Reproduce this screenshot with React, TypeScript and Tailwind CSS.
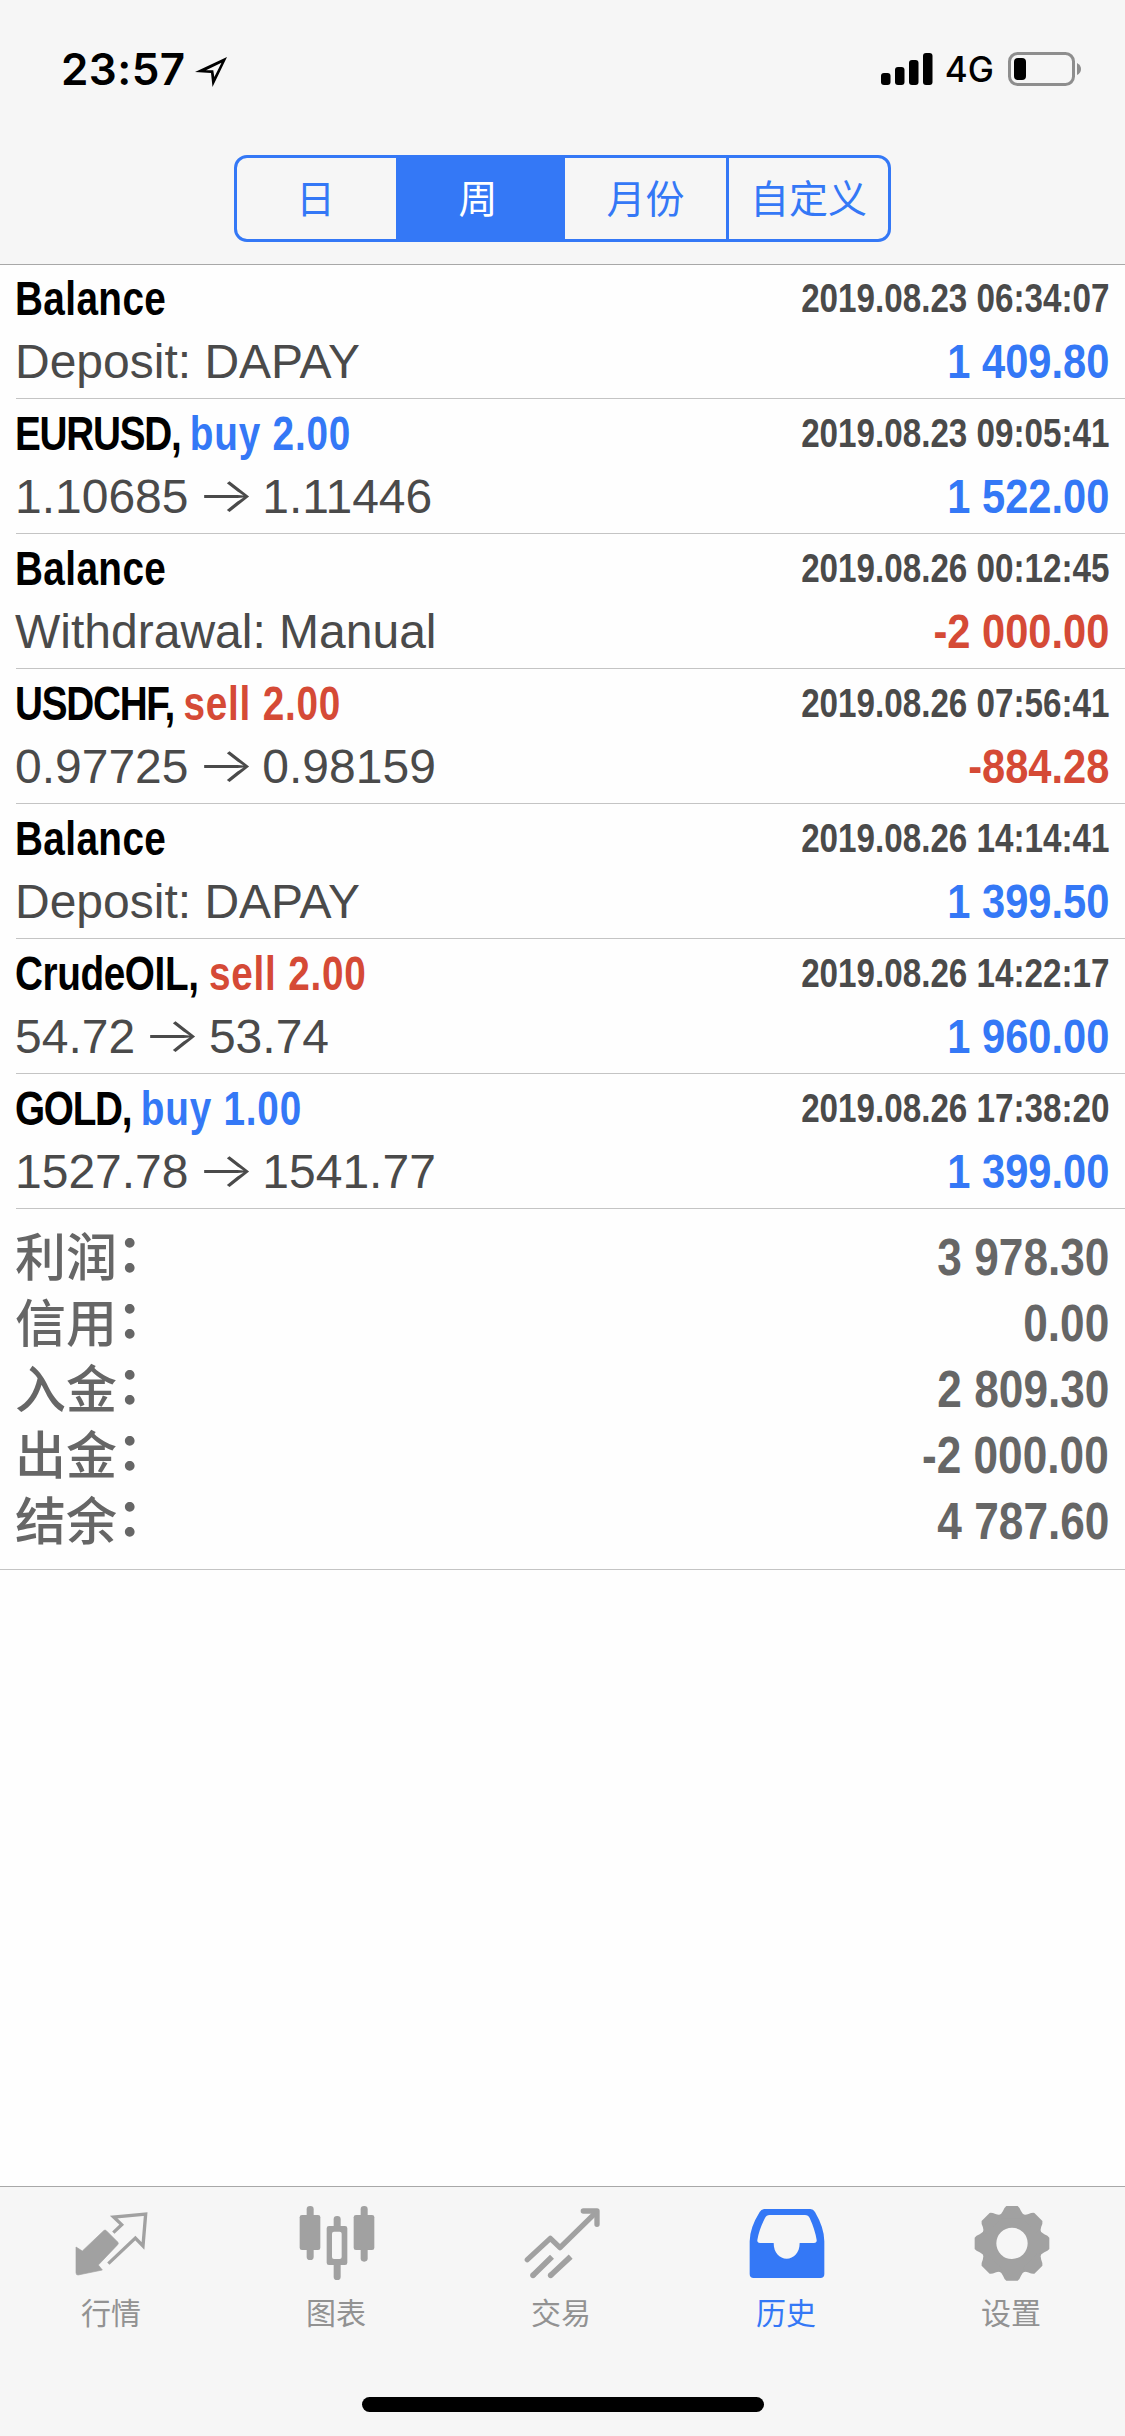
import React from "react";

type Tone = "blue" | "red";

type Deal = {
  symbol: string;
  action?: string;
  actionTone?: Tone;
  time: string;
  comment?: string;
  open?: string;
  close?: string;
  profit: string;
  profitTone: Tone;
};

const periods = ["日", "周", "月份", "自定义"];

const deals: Deal[] = [
  { symbol: "Balance", time: "2019.08.23 06:34:07", comment: "Deposit: DAPAY", profit: "1 409.80", profitTone: "blue" },
  { symbol: "EURUSD", action: "buy 2.00", actionTone: "blue", time: "2019.08.23 09:05:41", open: "1.10685", close: "1.11446", profit: "1 522.00", profitTone: "blue" },
  { symbol: "Balance", time: "2019.08.26 00:12:45", comment: "Withdrawal: Manual", profit: "-2 000.00", profitTone: "red" },
  { symbol: "USDCHF", action: "sell 2.00", actionTone: "red", time: "2019.08.26 07:56:41", open: "0.97725", close: "0.98159", profit: "-884.28", profitTone: "red" },
  { symbol: "Balance", time: "2019.08.26 14:14:41", comment: "Deposit: DAPAY", profit: "1 399.50", profitTone: "blue" },
  { symbol: "CrudeOIL", action: "sell 2.00", actionTone: "red", time: "2019.08.26 14:22:17", open: "54.72", close: "53.74", profit: "1 960.00", profitTone: "blue" },
  { symbol: "GOLD", action: "buy 1.00", actionTone: "blue", time: "2019.08.26 17:38:20", open: "1527.78", close: "1541.77", profit: "1 399.00", profitTone: "blue" },
];

const totals = [
  { label: "利润", value: "3 978.30" },
  { label: "信用", value: "0.00" },
  { label: "入金", value: "2 809.30" },
  { label: "出金", value: "-2 000.00" },
  { label: "结余", value: "4 787.60" },
];

const toneClass = {
  blue: "text-[#3478f6]",
  red: "text-[#d54a36]",
};

// bold sans squeezed horizontally to get a condensed face
const condensed = "font-['Liberation_Sans',sans-serif] font-bold whitespace-pre";

// all-caps tickers are set tighter than mixed case names
const symbolTracking = (symbol: string) =>
  symbol === symbol.toUpperCase() ? "tracking-[-1.6px]" : "tracking-[-0.5px]";

const StatusBar = () => (
  <div className="flex h-[155px] items-start justify-between pl-[61px] pr-[43px] pt-[50px] text-black">
    <div className="flex items-center">
      <span className="font-['Inter',sans-serif] text-[44px] font-semibold leading-[38px] tracking-[0.4px]">
        23:57
      </span>
      <svg className="ml-[9px] h-[38px] w-[34px]" viewBox="0 0 34 38">
        <path
          fillRule="evenodd"
          d="M1 22 33 7 18.500 37 17 23ZM12 20.300 19.300 20.300 20.300 27 27.500 12.800Z"
        />
      </svg>
    </div>
    <div className="flex items-center">
      <svg className="h-[38px] w-[52px]" viewBox="0 0 52 38">
        <rect x="0" y="23" width="9.500" height="12" rx="3" />
        <rect x="14" y="17" width="9.500" height="18" rx="3" />
        <rect x="28" y="10" width="9.500" height="25" rx="3" />
        <rect x="42" y="3" width="9.500" height="32" rx="3" />
      </svg>
      <span className="ml-[12px] font-['Inter',sans-serif] text-[35px] font-medium leading-[38px]">
        4G
      </span>
      <svg className="ml-[14px] h-[38px] w-[74px]" viewBox="0 0 74 38">
        <rect x="1.500" y="3.500" width="64" height="31" rx="8" fill="none" stroke="#8e8e8e" strokeWidth="3" />
        <path d="M69 13Q73 15 73 19T69 25Z" fill="#8e8e8e" />
        <rect x="6" y="8" width="12" height="22" rx="4" />
      </svg>
    </div>
  </div>
);

const PeriodSwitch = () => (
  <div className="mx-auto grid h-[87px] w-[657px] grid-cols-[159px_166px_164px_1fr] overflow-hidden rounded-[13px] border-3 border-[#3478f6]">
    {periods.map((period, i) => (
      <button
        key={period}
        className={`pb-[5px] font-['Noto_Sans_CJK_SC',sans-serif] text-[39px] leading-[60px] ${
          i > 1 ? "border-l-3 border-[#3478f6]" : "pr-[2px]"
        } ${i === 1 ? "bg-[#3478f6] text-white" : "text-[#3478f6]"}`}
      >
        {period}
      </button>
    ))}
  </div>
);

const DealRow = ({ deal }: { deal: Deal }) => (
  <li className="flex h-[135px] justify-between border-b border-[#c4c4c4] pr-[16px]">
    <div className="-ml-px">
      <div className={`${condensed} mt-[4px] h-[64px] origin-left scale-x-[0.79] text-[49px] leading-[60px] text-black`}>
        {deal.action ? (
          <>
            <span className={symbolTracking(deal.symbol)}>{deal.symbol}, </span>
            <span className={`tracking-[1px] ${toneClass[deal.actionTone ?? "blue"]}`}>
              {deal.action}
            </span>
          </>
        ) : (
          <span className="tracking-[0.5px]">{deal.symbol}</span>
        )}
      </div>
      <div className="flex h-[60px] whitespace-pre font-['Liberation_Sans',sans-serif] text-[48px] leading-[60px] text-[#4a4a4a]">
        {deal.comment ?? (
          <>
            {deal.open}
            <span className="-mt-[2px] mb-[2px] scale-x-[1.28] px-[14px] font-['Inter',sans-serif] font-light">
              →
            </span>
            {deal.close}
          </>
        )}
      </div>
    </div>
    <div className="text-right">
      <div className={`${condensed} mt-[4px] h-[63px] origin-right scale-x-[0.83] text-[40px] leading-[60px] text-[#4a4a4a]`}>
        {deal.time}
      </div>
      <div className={`${condensed} h-[60px] origin-right scale-x-[0.85] text-[49px] leading-[60px] ${toneClass[deal.profitTone]}`}>
        {deal.profit}
      </div>
    </div>
  </li>
);

const Totals = () => (
  <dl className="border-b border-[#c4c4c4] pb-[15px] pl-[15px] pr-[16px] pt-[15px] text-[#666]">
    {totals.map((row) => (
      <div key={row.label} className="flex h-[66px] justify-between">
        <dt className="-mt-[3px] flex font-['Noto_Sans_CJK_SC',sans-serif] text-[51px] font-medium leading-[66px]">
          {row.label}
          <span className="-mt-[4px] font-bold">：</span>
        </dt>
        <dd className={`${condensed} origin-right scale-x-[0.85] text-[52px] leading-[66px]`}>
          {row.value}
        </dd>
      </div>
    ))}
  </dl>
);

const QuotesIcon = () => (
  <svg className="size-[78px]" viewBox="0 0 234 234">
    <path
      d="M6 132 25 144 89 83Q93 79 97 83L131 117Q135 121 131 125L73 186 85 201 12 216Q6 216 6 209Z"
      fill="currentColor"
      stroke="currentColor"
      strokeWidth="2"
      strokeLinejoin="round"
    />
    <path
      d="M118 89 143 65 119 42 215 33 207 129 184 105 103 182"
      fill="none"
      stroke="currentColor"
      strokeWidth="10"
    />
  </svg>
);

const ChartIcon = () => (
  <svg className="size-[78px]" viewBox="0 0 234 234" fill="currentColor">
    <rect x="23" y="9" width="21" height="162" rx="10" />
    <rect x="2" y="36" width="62" height="105" rx="7" />
    <rect x="104" y="39" width="21" height="40" rx="10" />
    <rect x="104" y="175" width="21" height="56" rx="10" />
    <path
      fillRule="evenodd"
      d="M90 69H138Q145 69 145 76V179Q145 186 138 186H90Q83 186 83 179V76Q83 69 90 69ZM105 86Q99 86 99 92V162Q99 168 105 168H122Q128 168 128 162V92Q128 86 122 86Z"
    />
    <rect x="185" y="9" width="21" height="167" rx="10" />
    <rect x="164" y="36" width="62" height="105" rx="7" />
  </svg>
);

const TradeIcon = () => (
  <svg className="size-[78px]" viewBox="0 0 234 234" fill="none" stroke="currentColor" strokeWidth="16">
    <path d="M10 170 79 106 108 134 216 28" strokeLinecap="round" strokeLinejoin="round" />
    <path d="M178 24H219V64" strokeLinecap="round" strokeLinejoin="round" />
    <path d="M84 161 28 216M140 161 81 216" strokeWidth="17" />
    <g fill="currentColor" stroke="none">
      <circle cx="27" cy="217" r="8.500" />
      <circle cx="80" cy="217" r="8.500" />
    </g>
  </svg>
);

const HistoryIcon = () => (
  <svg className="size-[78px]" viewBox="0 0 234 234" fill="currentColor">
    <path
      fillRule="evenodd"
      d="M47 18H184Q193 18 198 27Q226 75 226 115V213Q226 225 214 225H14Q2 225 2 213V115Q2 75 32 27Q37 18 47 18ZM62 36Q52 36 48 45Q30 80 25 111Q24 120 33 120H74C74 150 92 167 113 167S152 150 152 120H195Q204 120 203 111Q198 80 182 45Q178 36 168 36Z"
    />
  </svg>
);

const SettingsIcon = () => (
  <svg className="size-[78px]" viewBox="0 0 234 234" fill="currentColor">
    <g transform="translate(114 121)">
      <circle r="69" fill="none" stroke="currentColor" strokeWidth="44" />
      {[0, 45, 90, 135, 180, 225, 270, 315].map((angle) => (
        <path
          key={angle}
          transform={`rotate(${angle})`}
          d="M-17 -112H17Q23 -108 27 -97Q31 -87 42 -82L30 -75H-30L-42 -82Q-31 -87 -27 -97Q-23 -108 -17 -112Z"
        />
      ))}
    </g>
  </svg>
);

const tabs = [
  { label: "行情", icon: <QuotesIcon /> },
  { label: "图表", icon: <ChartIcon /> },
  { label: "交易", icon: <TradeIcon /> },
  { label: "历史", icon: <HistoryIcon />, active: true },
  { label: "设置", icon: <SettingsIcon /> },
];

const TabBar = () => (
  <nav className="h-[250px] border-t border-[#a8a8a8] bg-[#f6f6f6]">
    <div className="grid h-[210px] grid-cols-5 pt-[16px]">
      {tabs.map((tab) => (
        <a
          key={tab.label}
          className={`flex flex-col items-center ${tab.active ? "text-[#3478f6]" : "text-[#a1a1a1]"}`}
        >
          {tab.icon}
          <span
            className={`mt-[8px] pr-[3px] font-['Noto_Sans_CJK_SC',sans-serif] text-[30px] leading-[44px] ${
              tab.active ? "" : "text-[#929292]"
            }`}
          >
            {tab.label}
          </span>
        </a>
      ))}
    </div>
    <div className="mx-auto h-[15px] w-[402px] rounded-full bg-black" />
  </nav>
);

const App = () => {
  return (
    <div className="flex h-[2436px] w-[1125px] flex-col bg-[#fefefe]">
      <header className="h-[265px] border-b border-[#a8a8a8] bg-[#f6f6f6]">
        <StatusBar />
        <PeriodSwitch />
      </header>
      <main className="flex-1">
        <ul className="-mt-px pl-[16px]">
          {deals.map((deal) => (
            <DealRow key={deal.time} deal={deal} />
          ))}
        </ul>
        <Totals />
      </main>
      <TabBar />
    </div>
  );
};

export default App;
